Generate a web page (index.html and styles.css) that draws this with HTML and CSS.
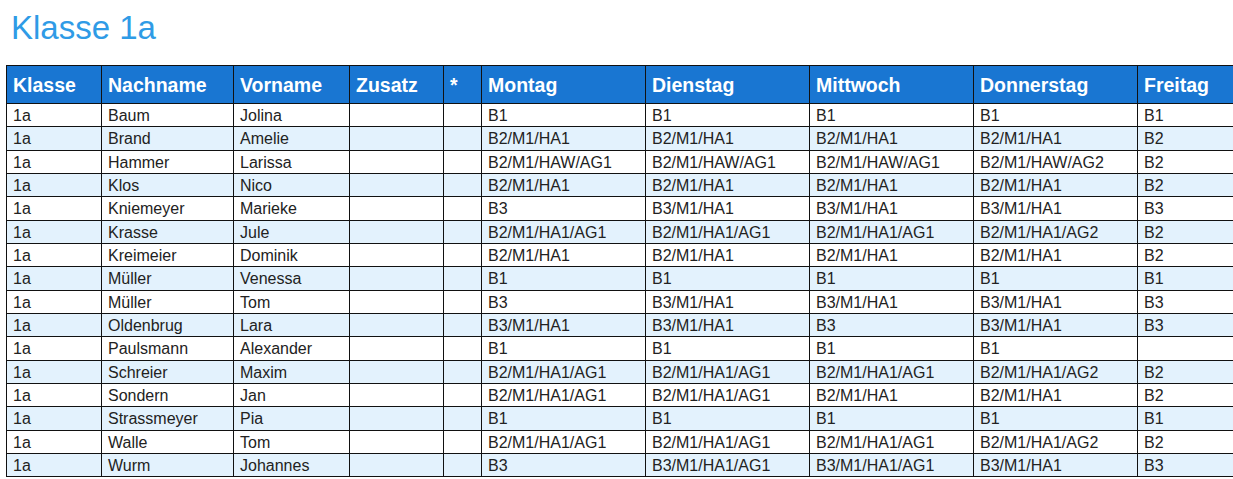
FILE: index.html
```html
<!DOCTYPE html>
<html lang="de">
<head>
<meta charset="utf-8">
<title>Klasse 1a</title>
<link rel="stylesheet" href="styles.css">
</head>
<body>
<h1 class="title">Klasse 1a</h1>
<table class="plan">
<colgroup>
<col class="c-klasse"><col class="c-nach"><col class="c-vor"><col class="c-zus"><col class="c-star">
<col class="c-day"><col class="c-day"><col class="c-day"><col class="c-day"><col class="c-day">
</colgroup>
<thead>
<tr><th>Klasse</th><th>Nachname</th><th>Vorname</th><th>Zusatz</th><th>*</th><th>Montag</th><th>Dienstag</th><th>Mittwoch</th><th>Donnerstag</th><th>Freitag</th></tr>
</thead>
<tbody>
<tr><td>1a</td><td>Baum</td><td>Jolina</td><td></td><td></td><td>B1</td><td>B1</td><td>B1</td><td>B1</td><td>B1</td></tr>
<tr><td>1a</td><td>Brand</td><td>Amelie</td><td></td><td></td><td>B2/M1/HA1</td><td>B2/M1/HA1</td><td>B2/M1/HA1</td><td>B2/M1/HA1</td><td>B2</td></tr>
<tr><td>1a</td><td>Hammer</td><td>Larissa</td><td></td><td></td><td>B2/M1/HAW/AG1</td><td>B2/M1/HAW/AG1</td><td>B2/M1/HAW/AG1</td><td>B2/M1/HAW/AG2</td><td>B2</td></tr>
<tr><td>1a</td><td>Klos</td><td>Nico</td><td></td><td></td><td>B2/M1/HA1</td><td>B2/M1/HA1</td><td>B2/M1/HA1</td><td>B2/M1/HA1</td><td>B2</td></tr>
<tr><td>1a</td><td>Kniemeyer</td><td>Marieke</td><td></td><td></td><td>B3</td><td>B3/M1/HA1</td><td>B3/M1/HA1</td><td>B3/M1/HA1</td><td>B3</td></tr>
<tr><td>1a</td><td>Krasse</td><td>Jule</td><td></td><td></td><td>B2/M1/HA1/AG1</td><td>B2/M1/HA1/AG1</td><td>B2/M1/HA1/AG1</td><td>B2/M1/HA1/AG2</td><td>B2</td></tr>
<tr><td>1a</td><td>Kreimeier</td><td>Dominik</td><td></td><td></td><td>B2/M1/HA1</td><td>B2/M1/HA1</td><td>B2/M1/HA1</td><td>B2/M1/HA1</td><td>B2</td></tr>
<tr><td>1a</td><td>Müller</td><td>Venessa</td><td></td><td></td><td>B1</td><td>B1</td><td>B1</td><td>B1</td><td>B1</td></tr>
<tr><td>1a</td><td>Müller</td><td>Tom</td><td></td><td></td><td>B3</td><td>B3/M1/HA1</td><td>B3/M1/HA1</td><td>B3/M1/HA1</td><td>B3</td></tr>
<tr><td>1a</td><td>Oldenbrug</td><td>Lara</td><td></td><td></td><td>B3/M1/HA1</td><td>B3/M1/HA1</td><td>B3</td><td>B3/M1/HA1</td><td>B3</td></tr>
<tr><td>1a</td><td>Paulsmann</td><td>Alexander</td><td></td><td></td><td>B1</td><td>B1</td><td>B1</td><td>B1</td><td></td></tr>
<tr><td>1a</td><td>Schreier</td><td>Maxim</td><td></td><td></td><td>B2/M1/HA1/AG1</td><td>B2/M1/HA1/AG1</td><td>B2/M1/HA1/AG1</td><td>B2/M1/HA1/AG2</td><td>B2</td></tr>
<tr><td>1a</td><td>Sondern</td><td>Jan</td><td></td><td></td><td>B2/M1/HA1/AG1</td><td>B2/M1/HA1/AG1</td><td>B2/M1/HA1</td><td>B2/M1/HA1</td><td>B2</td></tr>
<tr><td>1a</td><td>Strassmeyer</td><td>Pia</td><td></td><td></td><td>B1</td><td>B1</td><td>B1</td><td>B1</td><td>B1</td></tr>
<tr><td>1a</td><td>Walle</td><td>Tom</td><td></td><td></td><td>B2/M1/HA1/AG1</td><td>B2/M1/HA1/AG1</td><td>B2/M1/HA1/AG1</td><td>B2/M1/HA1/AG2</td><td>B2</td></tr>
<tr><td>1a</td><td>Wurm</td><td>Johannes</td><td></td><td></td><td>B3</td><td>B3/M1/HA1/AG1</td><td>B3/M1/HA1/AG1</td><td>B3/M1/HA1</td><td>B3</td></tr>
</tbody>
</table>
</body>
</html>
```

FILE: styles.css
```css
html {
  overflow: hidden;
}
body {
  margin: 0;
  padding: 0 6px;
  font-family: "Liberation Sans", Arial, sans-serif;
  background: #ffffff;
}
.title {
  margin: 0;
  padding: 9px 0 0 5px;
  height: 65px;
  box-sizing: border-box;
  font-size: 33px;
  line-height: 38px;
  font-weight: normal;
  color: #2f9be6;
}
.plan {
  border-collapse: collapse;
  table-layout: fixed;
  width: 1295px;
  border: 1px solid #111;
}
.c-klasse { width: 95px; }
.c-nach { width: 132px; }
.c-vor { width: 116px; }
.c-zus { width: 94px; }
.c-star { width: 38px; }
.c-day { width: 164px; }
.plan th,
.plan td {
  border: 1px solid #111;
  text-align: left;
  white-space: nowrap;
  overflow: hidden;
}
.plan th {
  background: #1976d2;
  color: #ffffff;
  font-size: 19.5px;
  font-weight: bold;
  line-height: 22px;
  padding: 8px 6px 7px;
  vertical-align: middle;
}
.plan td {
  font-size: 16px;
  line-height: 18px;
  padding: 3px 6px 1.33px;
  color: #222222;
}
.plan tbody tr:nth-child(even) td {
  background: #e3f2fd;
}
```
